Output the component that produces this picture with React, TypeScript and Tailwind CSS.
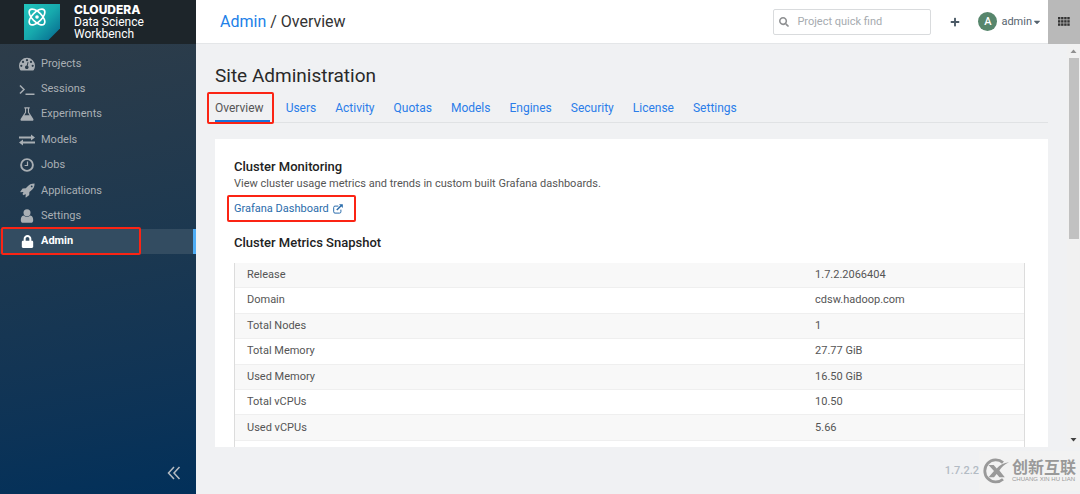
import type { ReactNode } from "react";
import clsx from "clsx";
import { FaCaretDown, FaLock, FaPlus, FaSearch } from "react-icons/fa";

function DashboardIcon() {
  return (
    <svg viewBox="0 0 16 14" className="w-4 h-[14px]">
      <path
        d="M8 .8a8 8 0 0 0-8 8c0 1.500.4 2.900 1.200 4.200.1.300.4.400.7.400h12.200c.3 0 .6-.1.700-.4.800-1.300 1.200-2.700 1.200-4.200a8 8 0 0 0-8-8z"
        fill="currentColor"
      />
      <g fill="#2c3c49">
        <circle cx="2.300" cy="8.800" r="1.100" />
        <circle cx="4" cy="4.900" r="1.100" />
        <circle cx="8" cy="3.200" r="1.100" />
        <circle cx="12" cy="4.900" r="1.100" />
        <circle cx="13.700" cy="8.800" r="1.100" />
        <path d="M8.600 5.100l.9.250-.8 3.400a1.800 1.800 0 1 1-1-.25z" />
      </g>
    </svg>
  );
}

function TerminalIcon() {
  return (
    <svg viewBox="0 0 16 14" className="w-4 h-[14px]" fill="none" stroke="currentColor" strokeWidth="1.500">
      <path d="M1 3.500l4 4-4 4M6.500 12.200H15.500" />
    </svg>
  );
}

function FlaskIcon() {
  return (
    <svg viewBox="0 0 14 14" className="size-[14px]">
      <path
        d="M4.300.3h5.400v1.200h-.7v3.700l4.200 6.500c.7 1.100.2 2.100-1.200 2.100H2c-1.400 0-1.900-1-1.200-2.100L5 5.200V1.500h-.7z"
        fill="currentColor"
      />
      <path d="M6.100 1.500h1.800v4l1.700 2.700H4.400l1.700-2.700z" fill="#283b4b" />
    </svg>
  );
}

function ExchangeIcon() {
  return (
    <svg viewBox="0 0 16 12" className="w-4 h-3" fill="currentColor">
      <path d="M0 2.500h12V.4L16 3.500l-4 3.100V4.500H0zM16 7.500H4V5.400L0 8.500l4 3.100V9.500h12z" />
    </svg>
  );
}

function ClockIcon() {
  return (
    <svg viewBox="0 0 14 14" className="size-[14px]" fill="none" stroke="currentColor">
      <circle cx="7" cy="7" r="5.900" strokeWidth="1.900" />
      <path d="M7.500 3.500v4H4.600" strokeWidth="1.200" />
    </svg>
  );
}

function RocketIcon() {
  return (
    <svg viewBox="0 0 15 15" className="size-[15px]">
      <path
        d="M14.600.4c-3.400 0-5.500 1-7.600 3.500L5.800 5.300l-3 .2c-.2 0-.3.100-.4.200L.300 8.700c-.2.300 0 .5.300.5l2.500-.3.300.6-1 1.500L3.600 12.300 5.200 11.300l.6.300-.3 2.500c0 .3.300.5.500.3l3-2.100c.1-.1.200-.2.200-.4l.2-3L10.900 7.800C13.500 5.600 14.600 3.800 14.600.4z"
        fill="currentColor"
      />
      <circle cx="11.700" cy="3.400" r=".9" fill="#203a50" />
    </svg>
  );
}

function UserIcon() {
  return (
    <svg viewBox="0 0 14 14" className="size-[14px]" fill="currentColor">
      <path d="M3.600 6.400C1.600 6.800.8 8.600.8 11.200c0 1.600.9 2.600 2.300 2.600h7.800c1.400 0 2.300-1 2.300-2.600 0-2.600-.8-4.400-2.800-4.800A4.800 4.800 0 0 1 7 7.800a4.800 4.800 0 0 1-3.400-1.400z" />
      <circle cx="7" cy="3.700" r="3.500" />
    </svg>
  );
}

function ExternalLinkIcon() {
  return (
    <svg viewBox="0 0 10 10" className="size-[10px]" fill="none" stroke="currentColor" strokeWidth="1">
      <path d="M5.400 2.100H2A1.300 1.300 0 0 0 .7 3.400v4.400A1.300 1.300 0 0 0 2 9.100h4.600a1.300 1.300 0 0 0 1.300-1.300V5.600" />
      <path d="M3.800 6 8 1.800" strokeWidth="1.500" />
      <path d="M6 .2h3.800V4z" fill="currentColor" stroke="none" />
    </svg>
  );
}

function AppsIcon() {
  return (
    <svg viewBox="0 0 12 9" className="w-3 h-[9px]" fill="currentColor">
      {[0, 3.1, 6.2, 9.3].map((x) =>
        [0, 3.2, 6.4].map((y) => <rect key={`${x}-${y}`} x={x} y={y} width="2.4" height="2.4" />),
      )}
    </svg>
  );
}

function LogoMark() {
  return (
    <svg viewBox="0 0 36 36" className="size-9 shrink-0">
      <defs>
        <linearGradient id="mark" x1="0" y1="0" x2="1" y2="1">
          <stop offset="0" stopColor="#22c5bd" />
          <stop offset="0.5" stopColor="#17a9ad" />
          <stop offset="1" stopColor="#05658d" />
        </linearGradient>
      </defs>
      <path d="M0 0h36v24.500L24.500 36H0z" fill="url(#mark)" />
      <g fill="none" stroke="#fff" strokeWidth="1.600">
        <ellipse cx="13" cy="13" rx="10" ry="4.800" transform="rotate(45 13 13)" />
        <ellipse cx="13" cy="13" rx="10" ry="4.800" transform="rotate(-45 13 13)" />
      </g>
      <circle cx="13" cy="13" r="1.800" fill="#fff" />
    </svg>
  );
}

function WatermarkLogo() {
  return (
    <svg viewBox="0 0 28 26" className="w-7 h-[26px] shrink-0">
      <path d="M21 4.600A11 11 0 1 0 21 21.200" fill="none" stroke="#999" strokeWidth="2.800" />
      <path
        d="M6.500 7h5.200l3 3.400C18 6.800 21.500 5 27 4.200c-4.800 2.200-7.600 5-9.600 8.400l5.400 6.600h-5.400l-2.700-3.300-2.700 3.300H6.500l5.500-6.200z"
        fill="#999"
      />
    </svg>
  );
}

const NAV_ITEMS: { label: string; icon: ReactNode; active?: boolean }[] = [
  { label: "Projects", icon: <DashboardIcon /> },
  { label: "Sessions", icon: <TerminalIcon /> },
  { label: "Experiments", icon: <FlaskIcon /> },
  { label: "Models", icon: <ExchangeIcon /> },
  { label: "Jobs", icon: <ClockIcon /> },
  { label: "Applications", icon: <RocketIcon /> },
  { label: "Settings", icon: <UserIcon /> },
  { label: "Admin", icon: <FaLock size={13} />, active: true },
];

const TABS = ["Overview", "Users", "Activity", "Quotas", "Models", "Engines", "Security", "License", "Settings"];

const METRICS = [
  ["Release", "1.7.2.2066404"],
  ["Domain", "cdsw.hadoop.com"],
  ["Total Nodes", "1"],
  ["Total Memory", "27.77 GiB"],
  ["Used Memory", "16.50 GiB"],
  ["Total vCPUs", "10.50"],
  ["Used vCPUs", "5.66"],
];

function Highlight({ className }: { className?: string }) {
  return <span className={clsx("absolute border-2 border-[#fb2414] rounded-xs pointer-events-none", className)} />;
}

function Sidebar() {
  return (
    <aside className="w-[196px] shrink-0 flex flex-col bg-linear-170 from-[#303d48] via-[#1c3850] to-[#02305a]">
      <div className="h-11 flex gap-[14px] pl-6 pt-1 bg-[#1d252a] text-white">
        <LogoMark />
        <div className="text-xs leading-3">
          <div className="font-['Inter'] font-extrabold">CLOUDERA</div>
          <div>Data Science</div>
          <div>Workbench</div>
        </div>
      </div>
      <nav className="h-[203px] mt-[7px] flex flex-col">
        {NAV_ITEMS.map((item) => (
          <a
            key={item.label}
            href="#"
            className={clsx(
              "relative flex-1 flex items-center gap-[6px] pl-[19px]",
              item.active ? "bg-[#334c61] border-r-3 border-[#4fadf5] text-white font-bold" : "text-[#a9afb4]",
            )}
          >
            <span className="w-4 flex justify-center">{item.icon}</span>
            {item.label}
            {item.active && <Highlight className="left-px -top-[2px] -bottom-px w-[140px]" />}
          </a>
        ))}
      </nav>
      <button type="button" aria-label="Collapse sidebar" className="mt-auto ml-auto mr-[15px] mb-[14px] text-[#b6bcc2]">
        <svg viewBox="0 0 14 14" className="size-[14px]" fill="none" stroke="currentColor" strokeWidth="1.500">
          <path d="M7 1 1.500 7 7 13M12.500 1 7 7l5.500 6" />
        </svg>
      </button>
    </aside>
  );
}

function Header() {
  return (
    <header className="h-11 shrink-0 flex items-center bg-white border-b border-[#e4e6e8]">
      <h1 className="pl-6 text-base text-[#333]">
        <a href="#" className="text-[#2180e8]">
          Admin
        </a>{" "}
        / Overview
      </h1>
      <label className="ml-auto w-[158px] h-[26px] flex items-center gap-2 px-[5px] border border-[#d9dbdd] rounded-xs">
        <FaSearch size={10} className="shrink-0 text-[#8e9092]" />
        <input
          type="text"
          aria-label="Project quick find"
          placeholder="Project quick find"
          className="min-w-0 flex-1 outline-none placeholder:text-[#a6abaf]"
        />
      </label>
      <button type="button" aria-label="Create" className="ml-[19px] text-[#4b5a66]">
        <FaPlus size={10} />
      </button>
      <button type="button" className="ml-[18px] flex items-center text-[#56636e]">
        <span className="size-[19px] mr-1 rounded-full bg-[#57866c] flex items-center justify-center text-white font-medium">
          A
        </span>
        admin
        <FaCaretDown size={10} />
      </button>
      <button
        type="button"
        aria-label="Apps"
        className="ml-[6px] w-8 h-11 flex items-center justify-center bg-[#b9b9b9] text-[#333]"
      >
        <AppsIcon />
      </button>
    </header>
  );
}

function Tabs() {
  return (
    <nav className="mt-3 flex gap-[19px] border-b border-[#e0e2e4] text-xs leading-4">
      {TABS.map((tab, index) => (
        <a
          key={tab}
          href="#"
          className={clsx(
            "relative h-[22px] border-b-2",
            index === 0 ? "pr-[6px] -mr-[3px] border-[#1a73d9] text-[#555]" : "border-transparent text-[#2b7de9]",
          )}
        >
          {tab}
          {index === 0 && <Highlight className="-left-2 -right-1 -top-2 -bottom-1" />}
        </a>
      ))}
    </nav>
  );
}

function ClusterCard() {
  return (
    <section className="mt-4 flex-1 min-h-0 overflow-hidden flex flex-col bg-white pl-[19px] pr-[23px] pt-5">
      <h3 className="text-[13px] leading-4 font-medium text-[#222]">Cluster Monitoring</h3>
      <p className="leading-[18px]">View cluster usage metrics and trends in custom built Grafana dashboards.</p>
      <div className="mt-2 flex">
        <a href="#" className="relative flex items-center gap-1 text-[#2a6cab]">
          Grafana Dashboard
          <ExternalLinkIcon />
          <Highlight className="-left-[7px] -right-[13px] -top-[6px] -bottom-[5px]" />
        </a>
      </div>
      <h3 className="mt-[18px] text-[13px] leading-4 font-medium text-[#222]">Cluster Metrics Snapshot</h3>
      <div className="mt-3 flex-1 border-x border-[#dcdcdc]">
        <table className="w-full h-[178px] table-fixed">
          <tbody>
            {METRICS.map(([name, value]) => (
              <tr key={name} className="odd:bg-[#f8f8f8] border-b border-[#efefef]">
                <th scope="row" className="w-[72%] pl-3 text-left font-normal">
                  {name}
                </th>
                <td className="pl-3">{value}</td>
              </tr>
            ))}
          </tbody>
        </table>
      </div>
    </section>
  );
}

function Scrollbar() {
  return (
    <div className="w-[13px] shrink-0 flex flex-col items-center bg-[#f1f1f1]">
      <svg viewBox="0 0 13 14" className="w-[13px] h-[14px]">
        <path d="M3.500 9 6.500 5.500 9.500 9z" fill="#909090" />
      </svg>
      <div className="w-[10px] h-[45%] bg-[#c1c1c1]" />
      <svg viewBox="0 0 13 14" className="mt-auto w-[13px] h-[14px]">
        <path d="M3.500 5 6.500 8.500 9.500 5z" fill="#404040" />
      </svg>
    </div>
  );
}

export default function App() {
  return (
    <div className="h-screen flex overflow-hidden font-['Roboto','Noto_Sans_CJK_SC',sans-serif] text-[11px] leading-4 text-[#555]">
      <Sidebar />
      <div className="flex-1 min-w-0 flex flex-col bg-[#f0f1f3]">
        <Header />
        <div className="flex-1 min-h-0 flex">
          <main className="flex-1 min-w-0 flex flex-col px-[19px]">
            <h2 className="mt-5 text-[19px] leading-6 text-[#292929]">Site Administration</h2>
            <Tabs />
            <ClusterCard />
          </main>
          <Scrollbar />
        </div>
        <footer className="h-[47px] shrink-0 flex items-center justify-end text-[#b3bbc4] font-medium">
          <span>1.7.2.2</span>
          <div className="flex items-center h-10 pl-[3px] pr-1 gap-[2px] bg-[#f2f2f2] text-[#999]">
            <WatermarkLogo />
            <div>
              <div className="text-base leading-4 font-bold">创新互联</div>
              <div className="font-['Liberation_Sans'] text-[6px] leading-[6px] font-normal">CHUANG XIN HU LIAN</div>
            </div>
          </div>
        </footer>
      </div>
    </div>
  );
}
